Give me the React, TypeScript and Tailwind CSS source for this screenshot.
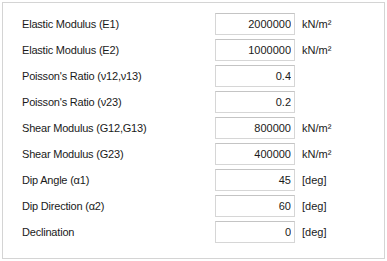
const rows = [
  { label: "Elastic Modulus (E1)", value: "2000000", unit: "kN/m²" },
  { label: "Elastic Modulus (E2)", value: "1000000", unit: "kN/m²" },
  { label: "Poisson's Ratio (ν12,ν13)", value: "0.4", unit: "" },
  { label: "Poisson's Ratio (ν23)", value: "0.2", unit: "" },
  { label: "Shear Modulus (G12,G13)", value: "800000", unit: "kN/m²" },
  { label: "Shear Modulus (G23)", value: "400000", unit: "kN/m²" },
  { label: "Dip Angle (α1)", value: "45", unit: "[deg]" },
  { label: "Dip Direction (α2)", value: "60", unit: "[deg]" },
  { label: "Declination", value: "0", unit: "[deg]" },
];

const App = () => {
  return (
    <div className="w-[387px] h-[261px] bg-white pt-[2px] pl-[2px] font-['Liberation_Sans',sans-serif] text-[11px] text-[#1a1a1a]">
      <div className="w-[383px] h-[257px] border border-[#d4d4d4] bg-white pt-[10px] pl-[19px]">
        <div className="flex flex-col gap-[4px]">
          {rows.map((row, idx) => (
            <div key={idx} className="flex items-center h-[22px]">
              <span className="w-[193px] whitespace-nowrap tracking-[-0.2px] pt-[1px]">{row.label}</span>
              <input
                readOnly
                value={row.value}
                className="w-[80px] h-[22px] border border-[#d6d6d6] border-t-[#c4c4c4] bg-white text-right pr-[3px] outline-none text-[11px] text-[#1a1a1a]"
              />
              <span className="ml-[7px] whitespace-nowrap pt-[1px]">{row.unit}</span>
            </div>
          ))}
        </div>
      </div>
    </div>
  );
};

export default App;
